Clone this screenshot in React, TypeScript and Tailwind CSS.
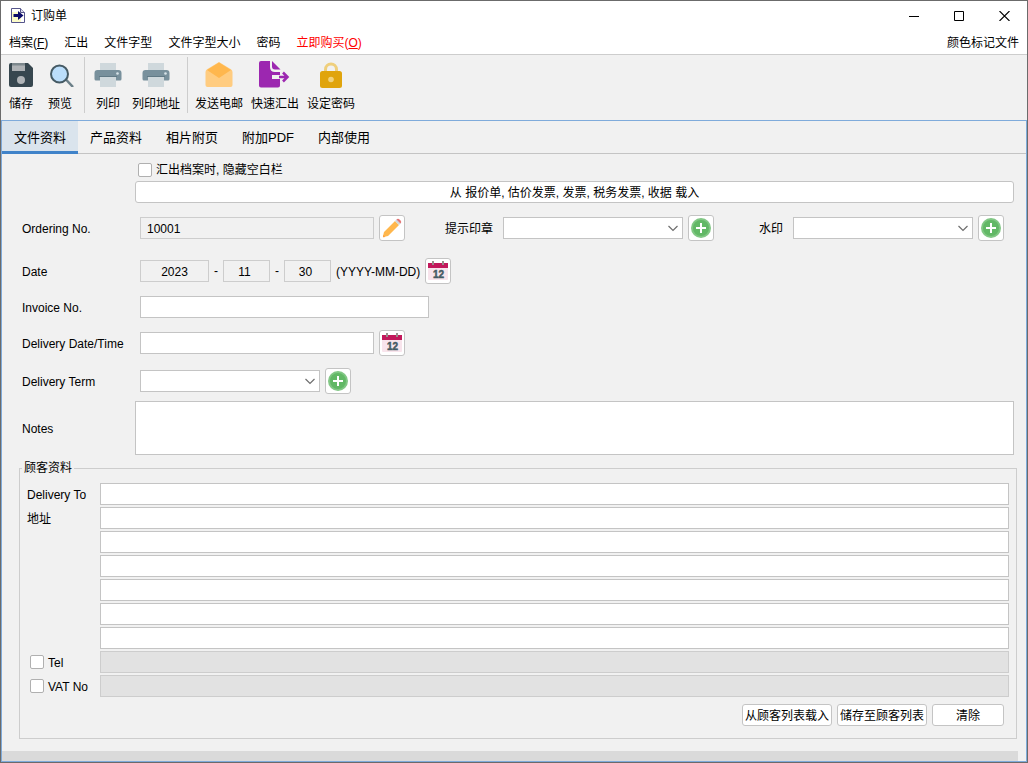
import React, { useState } from "react";

const toolButton = "flex flex-col items-center gap-2 text-xs leading-4 whitespace-nowrap";
const field = "h-[22px] border border-[#c4c4c4] bg-white px-1.5 text-xs outline-none";
const readOnlyField = "h-[22px] border border-[#cdcdcd] bg-[#f1f1f1] pt-0.5 text-xs outline-none";
const iconButton =
  "flex size-[26px] shrink-0 items-center justify-center rounded-[3px] border border-[#c4c4c4] bg-white";
const textButton = "h-[22px] rounded-[3px] border border-[#c4c4c4] bg-white pt-0.5 text-xs leading-4 whitespace-nowrap";
const checkbox = "size-[14px] shrink-0 appearance-none rounded-[2px] border border-[#b0b0b0] bg-white checked:bg-[#4083c9]";

function AppIcon() {
  return (
    <svg width="14" height="15" viewBox="0 0 14 15" aria-hidden="true">
      <path d="M.5.5h9l4 4v10H.5z" fill="#fff" stroke="#55558a" />
      <path d="M1 4h9v10H1z" fill="#fbfbc8" />
      <path d="M9.5.5v4h4" fill="#d8d8ea" stroke="#55558a" />
      <path d="M2.500 6H7V3l5.500 4.500L7 12V9H2.500z" fill="#0a0a6b" />
    </svg>
  );
}

function SaveIcon() {
  return (
    <svg width="24" height="24" viewBox="0 0 24 24" aria-hidden="true">
      <path d="M2 0h17l5 5v17a2 2 0 0 1-2 2H2a2 2 0 0 1-2-2V2a2 2 0 0 1 2-2z" fill="#37474f" />
      <path d="M3 0h13v8H3z" fill="#aeb2b5" />
      <path d="M3 0h13v2.500H3z" fill="#7d888d" />
      <circle cx="12" cy="17" r="4" fill="#b0b4b7" />
    </svg>
  );
}

function PreviewIcon() {
  return (
    <svg width="28" height="24" viewBox="-4 0 28 24" aria-hidden="true">
      <path d="M15.500 16l7.500 8" stroke="#6b7f88" strokeWidth="2.500" />
      <circle cx="9.500" cy="11" r="8.500" fill="#bbdefb" stroke="#455a64" strokeWidth="2" />
    </svg>
  );
}

function PrintIcon() {
  return (
    <svg width="28" height="24" viewBox="0 0 28 24" aria-hidden="true">
      <path d="M6 0h16v8H6z" fill="#cfd8dc" />
      <path d="M3.500 7h21a3 3 0 0 1 3 3v6a1.500 1.500 0 0 1-1.500 1.500H2A1.500 1.500 0 0 1 .5 16v-6a3 3 0 0 1 3-3z" fill="#78909c" />
      <path d="M6 13.500h16V24H6z" fill="#cfd8dc" />
      <path d="M5 13.500h18" stroke="#607985" />
      <circle cx="23.500" cy="10.500" r="1.300" fill="#d7e3e8" />
    </svg>
  );
}

function MailIcon() {
  return (
    <svg width="28" height="26" viewBox="0 0 28 26" aria-hidden="true">
      <path d="M.5 10Q.5 8 2.500 7L14 0l11.500 7q2 1 2 3v13a2 2 0 0 1-2 2h-23a2 2 0 0 1-2-2z" fill="#ffcc80" />
      <path d="M2 8L14 .5 26 8l-12 8z" fill="#ffb74d" />
    </svg>
  );
}

function ExportIcon() {
  return (
    <svg width="32" height="27" viewBox="0 0 32 27" aria-hidden="true">
      <path d="M2 0h9v6q0 5 5 5h5v3h-8v4h8v6.500q0 2-2 2H2q-2 0-2-2V2q0-2 2-2z" fill="#9c27b0" />
      <path d="M13 0l8.500 8.500H16q-3 0-3-3z" fill="#9c27b0" />
      <path d="M20 16h8.500M24 11.500l4.500 4.500-4.500 4.500" fill="none" stroke="#9c27b0" strokeWidth="2.500" />
    </svg>
  );
}

function LockIcon() {
  return (
    <svg width="24" height="26" viewBox="0 0 24 26" aria-hidden="true">
      <path d="M6.500 11V7.500a5.500 5.500 0 0 1 11 0V11" fill="none" stroke="#efcf7c" strokeWidth="3" />
      <rect x="1" y="9" width="22" height="17" rx="2.500" fill="#e0a40c" />
      <circle cx="12" cy="17.500" r="2.800" fill="#f1d27c" />
    </svg>
  );
}

function PencilIcon() {
  return (
    <svg width="20" height="20" viewBox="0 0 20 20" aria-hidden="true">
      <path d="M2 14L13 3l4 4L6 18l-4.500 1q-.8 0-.5-1z" fill="#ffb74d" />
      <path d="M13 3l2-2 4 4-2 2z" fill="#cfd8dc" />
      <path d="M14.500 1.500q1.500-1.500 3 0l1 1q1.500 1.500 0 3z" fill="#e57373" />
      <path d="M1.300 17l2 2-1.800.3q-.6 0-.5-.6z" fill="#ff9d3c" />
    </svg>
  );
}

function CalendarIcon() {
  return (
    <svg width="20" height="20" viewBox="0 0 20 20" aria-hidden="true">
      <path d="M0 7h20v11q0 1-1 1H1q-1 0-1-1z" fill="#f8e4ec" />
      <path d="M0 2h20v5H0z" fill="#c2185b" />
      <path d="M4 0h2v4H4zM14 0h2v4h-2z" fill="#9a8f8c" />
      <text x="10.500" y="17" textAnchor="middle" fontSize="10" fontWeight="bold" fill="#455a64" stroke="#455a64" strokeWidth=".5" fontFamily="Liberation Sans, sans-serif">
        12
      </text>
    </svg>
  );
}

function PlusIcon() {
  return (
    <svg width="20" height="20" viewBox="0 0 20 20" aria-hidden="true">
      <circle cx="10" cy="10" r="10" fill="#81c784" />
      <circle cx="10" cy="10" r="8" fill="#62b866" />
      <path d="M10 5v10M5 10h10" stroke="#fff" strokeWidth="2" />
    </svg>
  );
}

function Combo({ id }: { id: string }) {
  return (
    <div className="relative w-[180px]">
      <select id={id} className={`${field} block w-full appearance-none`} />
      <svg className="pointer-events-none absolute top-2 right-[5px]" width="10" height="7" viewBox="0 0 10 7" aria-hidden="true">
        <path d="M.5 1L5 5.500 9.500 1" fill="none" stroke="#6e6e6e" strokeWidth="1.200" />
      </svg>
    </div>
  );
}

function AddButton({ label }: { label: string }) {
  return (
    <button type="button" aria-label={label} className={iconButton}>
      <PlusIcon />
    </button>
  );
}

function FormRow({ label, id, children }: { label: string; id: string; children: React.ReactNode }) {
  return (
    <div className="flex items-center">
      <label htmlFor={id} className="w-[118px] shrink-0 pt-0.5">
        {label}
      </label>
      <div className="flex min-w-0 flex-1 items-center gap-[5px]">{children}</div>
    </div>
  );
}

const tabs = ["文件资料", "产品资料", "相片附页", "附加PDF", "内部使用"];
const addressLines = [1, 2, 3, 4, 5, 6];

export default function App() {
  const [tab, setTab] = useState(0);

  return (
    <div className="flex min-h-screen flex-col border border-[#6b6b6b] bg-[#f1f1f1] font-['Liberation_Sans','Noto_Sans_CJK_SC',sans-serif] text-xs leading-4 text-black">
      <header className="bg-white">
        <div className="flex h-[29px] items-center justify-between pr-4 pl-2.5">
          <h1 className="flex items-center gap-1.5">
            <AppIcon />
            订购单
          </h1>
          <div className="flex items-center gap-[33px]">
            <button type="button" aria-label="最小化" className="p-px">
              <svg width="10" height="10" viewBox="0 0 10 10"><path d="M0 5.500h10" stroke="#000" /></svg>
            </button>
            <button type="button" aria-label="最大化" className="p-px">
              <svg width="10" height="10" viewBox="0 0 10 10"><path d="M.5.5h9v9h-9z" fill="none" stroke="#000" /></svg>
            </button>
            <button type="button" aria-label="关闭" className="p-px">
              <svg width="11" height="10" viewBox="0 0 11 10"><path d="M.5 0l10 10M10.500 0l-10 10" stroke="#000" strokeWidth="1.100" /></svg>
            </button>
          </div>
        </div>
        <nav className="flex h-[25px] items-center gap-4 border-b border-[#cdcdcd] px-2 pt-0.5">
          <button type="button">档案(<u>F</u>)</button>
          <button type="button">汇出</button>
          <button type="button">文件字型</button>
          <button type="button">文件字型大小</button>
          <button type="button">密码</button>
          <button type="button" className="text-[#ff0000]">立即购买(<u>O</u>)</button>
          <button type="button" className="ml-auto">颜色标记文件</button>
        </nav>
      </header>

      <div className="flex h-[65px] items-start gap-2 px-2 pt-[2px]">
        <div className="flex gap-[13px] pt-1.5">
          <button type="button" className={toolButton}><SaveIcon /><span className="pt-px">储存</span></button>
          <button type="button" className={toolButton}><PreviewIcon /><span className="pt-px">预览</span></button>
        </div>
        <div className="ml-0.5 h-14 w-px bg-[#cdcdcd]" />
        <div className="flex gap-2.5 pt-1.5 pl-px">
          <button type="button" className={toolButton}><PrintIcon /><span className="pt-px">列印</span></button>
          <button type="button" className={toolButton}><PrintIcon /><span className="pt-px">列印地址</span></button>
        </div>
        <div className="-ml-px h-14 w-px bg-[#cdcdcd]" />
        <div className="-ml-px flex items-end gap-2 pt-1">
          <button type="button" className={toolButton}><MailIcon />发送电邮</button>
          <button type="button" className={toolButton}><ExportIcon />快速汇出</button>
          <button type="button" className={toolButton}><LockIcon />设定密码</button>
        </div>
      </div>

      <main className="flex flex-1 flex-col border border-[#7fabdb]">
        <div role="tablist" className="flex h-[33px] border-b border-[#c4c4c4] text-[13px]">
          {tabs.map((name, i) => (
            <button
              key={name}
              type="button"
              role="tab"
              aria-selected={i === tab}
              onClick={() => setTab(i)}
              className={
                i === tab
                  ? "-mb-px border-b-[3px] border-[#4083c9] bg-[#dae4ed] px-3 pt-1"
                  : "px-3 pt-0.5"
              }
            >
              {name}
            </button>
          ))}
        </div>

        <form className="flex-1 pt-2 pr-[9px] pb-3 pl-[17px]">
          <div className="pr-[3px] pl-[3px]">
            <div className="ml-[113px]">
              <label className="ml-[3px] flex h-[15px] w-fit items-center gap-1">
                <input type="checkbox" className={checkbox} />
                汇出档案时, 隐藏空白栏
              </label>
              <button type="button" className={`${textButton} mt-1 block w-full`}>
                从 报价单, 估价发票, 发票, 税务发票, 收据 载入
              </button>
            </div>

            <div className="mt-3 flex flex-col gap-3">
              <div className="mb-[5px] flex items-center">
                <label htmlFor="order" className="w-[118px] shrink-0 pt-0.5">Ordering No.</label>
                <div className="flex items-center gap-[5px]">
                  <input id="order" readOnly defaultValue="10001" className={`${readOnlyField} w-[234px] px-1.5`} />
                  <button type="button" aria-label="编辑" className={iconButton}><PencilIcon /></button>
                </div>
                <div className="ml-10 flex items-center gap-[5px]">
                  <label htmlFor="stamp" className="mr-[5px] pt-0.5 whitespace-nowrap">提示印章</label>
                  <Combo id="stamp" />
                  <AddButton label="新增印章" />
                </div>
                <div className="ml-[45px] flex items-center gap-[5px]">
                  <label htmlFor="watermark" className="mr-[5px] pt-0.5 whitespace-nowrap">水印</label>
                  <Combo id="watermark" />
                  <AddButton label="新增水印" />
                </div>
              </div>
              <FormRow label="Date" id="year">
                <input id="year" readOnly defaultValue="2023" className={`${readOnlyField} w-[69px] px-1 text-center`} />
                <span>-</span>
                <input aria-label="Month" readOnly defaultValue="11" className={`${readOnlyField} w-[47px] pr-1 text-center`} />
                <span>-</span>
                <input aria-label="Day" readOnly defaultValue="30" className={`${readOnlyField} w-[47px] pr-1 text-center`} />
                <span className="pt-0.5">(YYYY-MM-DD)</span>
                <button type="button" aria-label="选择日期" className={iconButton}><CalendarIcon /></button>
              </FormRow>
              <FormRow label="Invoice No." id="invoice">
                <input id="invoice" className={`${field} w-[289px]`} />
              </FormRow>
              <FormRow label="Delivery Date/Time" id="delivery">
                <input id="delivery" className={`${field} w-[234px]`} />
                <button type="button" aria-label="选择送货日期" className={iconButton}><CalendarIcon /></button>
              </FormRow>
              <FormRow label="Delivery Term" id="term">
                <Combo id="term" />
                <AddButton label="新增条款" />
              </FormRow>
            </div>

            <div className="mt-[7px] flex items-center">
              <label htmlFor="notes" className="w-[113px] shrink-0 pt-0.5">Notes</label>
              <textarea id="notes" className="block h-[54px] min-w-0 flex-1 resize-none border border-[#c4c4c4] bg-white p-1.5 outline-none" />
            </div>
          </div>

          <fieldset className="mt-[5px] border border-[#cdcdcd] pr-[7px] pb-3 pl-[7px]">
            <legend className="-ml-[5px] px-0.5">顾客资料</legend>
            <div className="flex flex-col gap-0.5 pt-[7px]">
              <div className="flex items-center">
                <label htmlFor="deliverTo" className="w-[73px] shrink-0 pt-0.5">Delivery To</label>
                <input id="deliverTo" className={`${field} min-w-0 flex-1`} />
              </div>
              {addressLines.map((n) => (
                <div key={n} className="flex items-center">
                  <label htmlFor={`address${n}`} className="w-[73px] shrink-0 pt-0.5">{n === 1 ? "地址" : ""}</label>
                  <input id={`address${n}`} className={`${field} min-w-0 flex-1`} />
                </div>
              ))}
              {["Tel", "VAT No"].map((name) => (
                <div key={name} className="flex items-center">
                  <label className="flex w-[73px] shrink-0 items-center gap-1 pl-[3px] whitespace-nowrap">
                    <input type="checkbox" className={checkbox} />
                    <span className="pt-0.5">{name}</span>
                  </label>
                  <input aria-label={name} disabled className="h-[22px] min-w-0 flex-1 border border-[#cdcdcd] bg-[#e2e2e2] px-1.5" />
                </div>
              ))}
            </div>
            <div className="mt-[7px] mr-[5px] flex justify-end gap-[5px]">
              <button type="button" className={`${textButton} w-[90px]`}>从顾客列表载入</button>
              <button type="button" className={`${textButton} w-[90px]`}>储存至顾客列表</button>
              <button type="button" className={`${textButton} w-[72px]`}>清除</button>
            </div>
          </fieldset>
        </form>
        <div className="mr-2 h-2.5 bg-[#dadada]" />
      </main>
    </div>
  );
}
